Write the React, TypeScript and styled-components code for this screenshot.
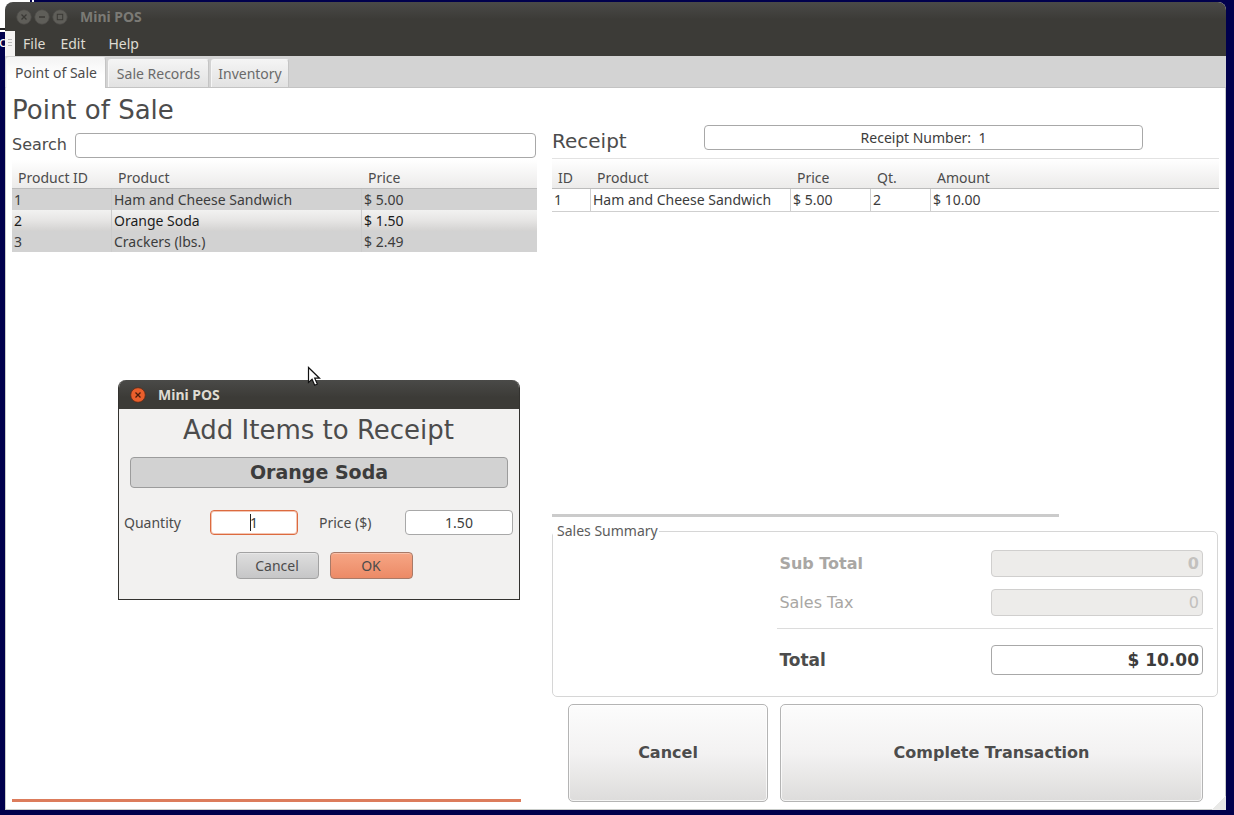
import React from "react";
import styled, { createGlobalStyle, css } from "styled-components";

const ui = `"Noto Sans", "Open Sans", sans-serif`;
const dejavu = `"DejaVu Sans", sans-serif`;

const Global = createGlobalStyle`
  *, *::before, *::after { box-sizing: border-box; }
  body { margin: 0; background: #00004c; font: 14px/20px ${ui}; color: #4c4c4c; }
  button, input { font: inherit; color: inherit; margin: 0; }
`;

const Desktop = styled.div`
  position: relative;
  display: flex;
  min-height: 100vh;
  padding: 2px 8px 5px 5px;
`;

const BackWindow = styled.div`
  position: absolute;
  top: 0;
  left: 0;
  width: 32px;
  height: 28px;
  background: #fff;
  border-right: 2px solid #00004c;
  box-shadow: 2px 0 0 #fff, 0 2px 0 #222, 0 4px 0 #fff;
`;

const BackText = styled.span`
  position: absolute;
  top: 32px;
  left: -1px;
  color: #fff;
`;

const Window = styled.div`
  position: relative;
  flex: 1;
  min-width: 0;
  display: flex;
  flex-direction: column;
  background: #fff;
  border-radius: 8px 8px 0 0;
  overflow: hidden;
`;

const TitleBar = styled.div<{ $active?: boolean }>`
  display: flex;
  align-items: center;
  gap: ${(p) => (p.$active ? "12px" : "2px")};
  height: 29px;
  padding-left: 11px;
  background: linear-gradient(#4a4a48, #3c3b37 60%);
  color: ${(p) => (p.$active ? "#dfdbd2" : "#7b7a75")};
  font-weight: 700;
`;

const TitleText = styled.span<{ $inset?: boolean }>`
  padding-left: ${(p) => (p.$inset ? "10px" : "0")};
`;

const WinButton = styled.button`
  display: block;
  width: 16px;
  height: 16px;
  padding: 0;
  border: 0;
  background: none;
`;

const MenuBar = styled.nav`
  display: flex;
  align-items: center;
  gap: 15px;
  height: 25px;
  background: #3c3b37;
`;

const Grip = styled.span`
  align-self: stretch;
  width: 10px;
  margin-right: -7px;
  padding: 8px 3px;
  background: #f4f3f2;
`;

const GripLines = styled.span`
  display: block;
  height: 9px;
  background: repeating-linear-gradient(#bbb 0 1px, transparent 1px 3px);
`;

const MenuButton = styled.button<{ $wide?: boolean }>`
  padding: 0;
  border: 0;
  background: none;
  color: #dfdbd2;
  margin-left: ${(p) => (p.$wide ? "8px" : "0")};
`;

const Tabs = styled.div`
  display: flex;
  align-items: flex-end;
  gap: 2px;
  height: 32px;
  padding-left: 1px;
  background: #d3d3d3;
  border-bottom: 1px solid #c3c3c3;
`;

const Tab = styled.button<{ $on?: boolean; $w: number }>`
  width: ${(p) => p.$w}px;
  height: 28px;
  padding: 0;
  white-space: nowrap;
  border: 1px solid #f6f6f6;
  border-right-color: #c4c4c4;
  border-bottom: 0;
  border-radius: 3px 3px 0 0;
  background: linear-gradient(#f4f4f4, #e2e2e2);
  color: #6a6a6a;
  ${(p) =>
    p.$on &&
    css`
      height: 31px;
      margin-bottom: -1px;
      background: linear-gradient(#f4f4f4, #fff 60%);
      color: #4c4c4c;
    `}
`;

const Content = styled.main`
  flex: 1;
  display: grid;
  grid-template-columns: minmax(0, 525fr) minmax(0, 667fr);
  gap: 15px;
  padding: 0 6px;
  border: 1px solid #c9ccc9;
  border-top: 0;
`;

const Column = styled.section<{ $top: number }>`
  display: flex;
  flex-direction: column;
  padding: ${(p) => p.$top}px 0 7px;
`;

const Heading = styled.h1<{ $center?: boolean }>`
  margin: 0;
  font: 400 26px/32px ${dejavu};
  text-align: ${(p) => (p.$center ? "center" : "left")};
`;

const SearchRow = styled.label`
  display: flex;
  align-items: center;
  gap: 8px;
  margin: 6px 1px 1px 0;
  font: 16px/26px ${dejavu};
`;

const Field = styled.input<{ $focus?: boolean; $align?: string }>`
  flex: 1;
  width: 100%;
  min-width: 0;
  height: 25px;
  padding: 0 4px;
  border: 1px solid ${(p) => (p.$focus ? "#dc6a3f" : "#a8a8a8")};
  box-shadow: ${(p) => (p.$focus ? "inset 0 0 0 1px #f3c6b4" : "none")};
  border-radius: 4px;
  background: #fff;
  color: #3c3c3c;
  outline: 0;
  text-align: ${(p) => p.$align || "left"};
`;

const Table = styled.table<{ $lines?: boolean }>`
  width: 100%;
  table-layout: fixed;
  border-collapse: separate;
  border-spacing: 0;
  line-height: 20px;
  color: #3c3c3c;
  border-top: 1px solid ${(p) => (p.$lines ? "#e2e2e2" : "transparent")};

  thead tr {
    background: linear-gradient(#fff, #ebeae9);
  }
  th {
    height: ${(p) => (p.$lines ? "30px" : "29px")};
    padding: 8px 0 0 6px;
    border-bottom: 1px solid #bcbcbc;
    text-align: left;
    font-weight: 400;
    color: #4c4c4c;
  }
  td {
    height: ${(p) => (p.$lines ? "23px" : "21px")};
    padding: 0 0 0 2px;
    border-right: 1px solid ${(p) => (p.$lines ? "#cfcfcf" : "#cccccc")};
    border-bottom: ${(p) => (p.$lines ? "1px solid #cfcfcf" : "0")};
    white-space: nowrap;
  }
  td:last-child {
    border-right: 0;
  }
`;

const Col = styled.col<{ $w?: number }>`
  width: ${(p) => (p.$w ? `${p.$w}px` : "auto")};
`;

const Row = styled.tr<{ $selected?: boolean; $plain?: boolean }>`
  background: ${(p) =>
    p.$plain ? "#fff" : p.$selected ? "linear-gradient(#f2f2f1, #e6e5e4 50%, #d3d2d1)" : "#d2d2d2"};
  color: ${(p) => (p.$selected ? "#1c1c1c" : "#3c3c3c")};
`;

const Spacer = styled.div`
  flex: 1;
`;

const Bar = styled.div<{ $color: string; $share: number }>`
  width: ${(p) => p.$share}%;
  height: 3px;
  background: ${(p) => p.$color};
`;

const ReceiptHead = styled.label`
  display: grid;
  grid-template-columns: 152fr 439fr 76fr;
  height: 33px;
  font: 20px/32px ${dejavu};

  input {
    font: 14px/20px ${ui};
  }
`;

const Summary = styled.fieldset`
  margin: 3px 1px 7px 0;
  padding: 8px 4px 21px 0;
  border: 1px solid #d6d6d6;
  border-radius: 5px;
  min-width: 0;

  legend {
    padding: 0 1px 0 4px;
    line-height: 22px;
    color: #5c5c5c;
  }
`;

const Totals = styled.div`
  display: flex;
  flex-direction: column;
  gap: 12px;
  margin-left: 34%;
`;

const TotalRow = styled.label<{ $bold?: boolean; $off?: boolean; $large?: boolean }>`
  display: grid;
  grid-template-columns: 1fr 212px;
  align-items: center;
  padding: 0 10px 0 2px;
  font: ${(p) => (p.$bold ? 700 : 400)} ${(p) => (p.$large ? 17 : 16)}px/20px ${dejavu};
  color: ${(p) => (p.$off ? "#a9a7a4" : "#4c4c4c")};

  input {
    height: ${(p) => (p.$large ? 30 : 27)}px;
    padding-right: 3px;
    font: inherit;
  }
  input:disabled {
    background: #edecea;
    border-color: #d0cfce;
    color: #c3c1be;
  }
`;

const Rule = styled.hr`
  width: 100%;
  height: 1px;
  margin: 0 0 4px;
  border: 0;
  background: #dcdcdc;
`;

const Actions = styled.div`
  display: grid;
  grid-template-columns: 200fr 423fr;
  gap: 12px;
  padding: 0 16px;
`;

const BigButton = styled.button`
  height: 98px;
  border: 1px solid #b4b4b4;
  border-radius: 5px;
  background: linear-gradient(#fcfcfc, #f3f2f2 50%, #dddcdb);
  box-shadow: inset 0 0 0 1px rgba(255, 255, 255, 0.7);
  font: 700 16px/20px ${dejavu};
  color: #4c4c4c;
`;

const SizeGrip = styled.span`
  position: absolute;
  right: 0;
  bottom: 0;
  width: 14px;
  height: 14px;
  background: linear-gradient(135deg, transparent 50%, #e9e9e7 50%);
`;

const Dialog = styled.section`
  position: absolute;
  top: 380px;
  left: 118px;
  width: 402px;
  border: 1px solid #33322f;
  border-top: 0;
  border-radius: 8px 8px 0 0;
  background: #f2f1f0;
  overflow: hidden;
`;

const DialogBody = styled.form`
  padding: 5px 6px 20px 5px;
`;

const ProductName = styled.output`
  display: block;
  margin: 11px 5px 22px 6px;
  border: 1px solid #9c9c9c;
  border-radius: 4px;
  background: #d2d2d2;
  text-align: center;
  font: 700 19px/29px ${dejavu};
  color: #3c3c3c;
`;

const EntryRow = styled.div`
  display: grid;
  grid-template-columns: 86px 88px 107px 108px;
  align-items: center;
`;

const EntryBox = styled.span`
  position: relative;
  display: flex;
`;

const Caret = styled.span`
  position: absolute;
  top: 4px;
  left: 40px;
  width: 1px;
  height: 17px;
  background: #222;
`;

const EntryLabel = styled.label<{ $inset?: boolean }>`
  padding-left: ${(p) => (p.$inset ? "21px" : "0")};
`;

const DialogActions = styled.div`
  display: flex;
  justify-content: center;
  gap: 11px;
  margin-top: 17px;
  padding-left: 11px;
`;

const SmallButton = styled.button<{ $primary?: boolean }>`
  width: 83px;
  height: 27px;
  padding: 0;
  border: 1px solid ${(p) => (p.$primary ? "#a87a68" : "#a2a2a2")};
  border-radius: 4px;
  background: ${(p) =>
    p.$primary ? "linear-gradient(#f6a685, #ec8a66)" : "linear-gradient(#dedede, #c6c6c7)"};
  box-shadow: inset 0 1px 0 rgba(255, 255, 255, 0.3);
`;

const Pointer = styled.svg`
  position: absolute;
  top: 366px;
  left: 307px;
`;

type Kind = "close" | "minimize" | "maximize";

function WindowControl({ kind, active }: { kind: Kind; active?: boolean }) {
  const ink = active ? "#4a1d0c" : "#3a3935";
  return (
    <WinButton type="button" aria-label={kind}>
      <svg width="16" height="16" viewBox="0 0 16 16" fill="none" stroke={ink} strokeWidth="1.3">
        <circle cx="8" cy="8" r="7.3" fill={active ? "#ea5f2c" : "#5f5e59"} stroke={active ? "#5c2a18" : "#4b4a46"} strokeWidth="0.8" />
        {kind === "close" && <path d="M5.5 5.5l5 5M10.5 5.5l-5 5" />}
        {kind === "minimize" && <path d="M5 8h6" />}
        {kind === "maximize" && <rect x="5.3" y="5.3" width="5.4" height="5.4" strokeWidth="1" />}
      </svg>
    </WinButton>
  );
}

const products = [
  { id: "1", name: "Ham and Cheese Sandwich", price: "$ 5.00" },
  { id: "2", name: "Orange Soda", price: "$ 1.50", selected: true },
  { id: "3", name: "Crackers (lbs.)", price: "$ 2.49" },
];

export default function App() {
  return (
    <Desktop>
      <Global />
      <BackWindow />
      <BackText>c</BackText>
      <Window>
        <TitleBar>
          <WindowControl kind="close" />
          <WindowControl kind="minimize" />
          <WindowControl kind="maximize" />
          <TitleText $inset>Mini POS</TitleText>
        </TitleBar>
        <MenuBar>
          <Grip>
            <GripLines />
          </Grip>
          <MenuButton type="button">File</MenuButton>
          <MenuButton type="button">Edit</MenuButton>
          <MenuButton type="button" $wide>Help</MenuButton>
        </MenuBar>
        <Tabs role="tablist">
          <Tab role="tab" aria-selected $on $w={100}>Point of Sale</Tab>
          <Tab role="tab" $w={101}>Sale Records</Tab>
          <Tab role="tab" $w={78}>Inventory</Tab>
        </Tabs>
        <Content>
          <Column $top={6}>
            <Heading>Point of Sale</Heading>
            <SearchRow>
              Search
              <Field type="text" />
            </SearchRow>
            <Table>
              <colgroup>
                <Col $w={100} />
                <Col $w={250} />
                <Col />
              </colgroup>
              <thead>
                <tr>
                  <th>Product ID</th>
                  <th>Product</th>
                  <th>Price</th>
                </tr>
              </thead>
              <tbody>
                {products.map((p) => (
                  <Row key={p.id} $selected={p.selected}>
                    <td>{p.id}</td>
                    <td>{p.name}</td>
                    <td>{p.price}</td>
                  </Row>
                ))}
              </tbody>
            </Table>
            <Spacer />
            <Bar $color="#dc7c5c" $share={97} />
          </Column>
          <Column $top={37}>
            <ReceiptHead>
              Receipt
              <Field readOnly $align="center" defaultValue={"Receipt Number:  1"} />
            </ReceiptHead>
            <Table $lines>
              <colgroup>
                <Col $w={39} />
                <Col $w={200} />
                <Col $w={80} />
                <Col $w={60} />
                <Col />
              </colgroup>
              <thead>
                <tr>
                  <th>ID</th>
                  <th>Product</th>
                  <th>Price</th>
                  <th>Qt.</th>
                  <th>Amount</th>
                </tr>
              </thead>
              <tbody>
                <Row $plain>
                  <td>1</td>
                  <td>Ham and Cheese Sandwich</td>
                  <td>$ 5.00</td>
                  <td>2</td>
                  <td>$ 10.00</td>
                </Row>
              </tbody>
            </Table>
            <Spacer />
            <Bar $color="#cbcbcb" $share={76} />
            <Summary>
              <legend>Sales Summary</legend>
              <Totals>
                <TotalRow $bold $off>
                  Sub Total
                  <Field disabled $align="right" defaultValue="0" />
                </TotalRow>
                <TotalRow $off>
                  Sales Tax
                  <Field disabled $align="right" defaultValue="0" />
                </TotalRow>
                <Rule />
                <TotalRow $bold $large>
                  Total
                  <Field readOnly $align="right" defaultValue="$ 10.00" />
                </TotalRow>
              </Totals>
            </Summary>
            <Actions>
              <BigButton type="button">Cancel</BigButton>
              <BigButton type="button">Complete Transaction</BigButton>
            </Actions>
          </Column>
        </Content>
        <SizeGrip />
      </Window>
      <Dialog role="dialog" aria-label="Add Items to Receipt">
        <TitleBar $active>
          <WindowControl kind="close" active />
          <TitleText>Mini POS</TitleText>
        </TitleBar>
        <DialogBody>
          <Heading as="h2" $center>Add Items to Receipt</Heading>
          <ProductName>Orange Soda</ProductName>
          <EntryRow>
            <EntryLabel htmlFor="quantity">Quantity</EntryLabel>
            <EntryBox>
              <Field id="quantity" $focus $align="center" defaultValue="1" />
              <Caret />
            </EntryBox>
            <EntryLabel htmlFor="price" $inset>Price ($)</EntryLabel>
            <EntryBox>
              <Field id="price" $align="center" defaultValue="1.50" />
            </EntryBox>
          </EntryRow>
          <DialogActions>
            <SmallButton type="button">Cancel</SmallButton>
            <SmallButton type="button" $primary>OK</SmallButton>
          </DialogActions>
        </DialogBody>
      </Dialog>
      <Pointer width="14" height="21" viewBox="0 0 14 21">
        <path d="M1.5 1.5v15l3.6-3.3 2.6 6 2.6-1.2-2.6-5.8h4.8z" fill="#fff" stroke="#111" strokeWidth="1.2" />
      </Pointer>
    </Desktop>
  );
}
